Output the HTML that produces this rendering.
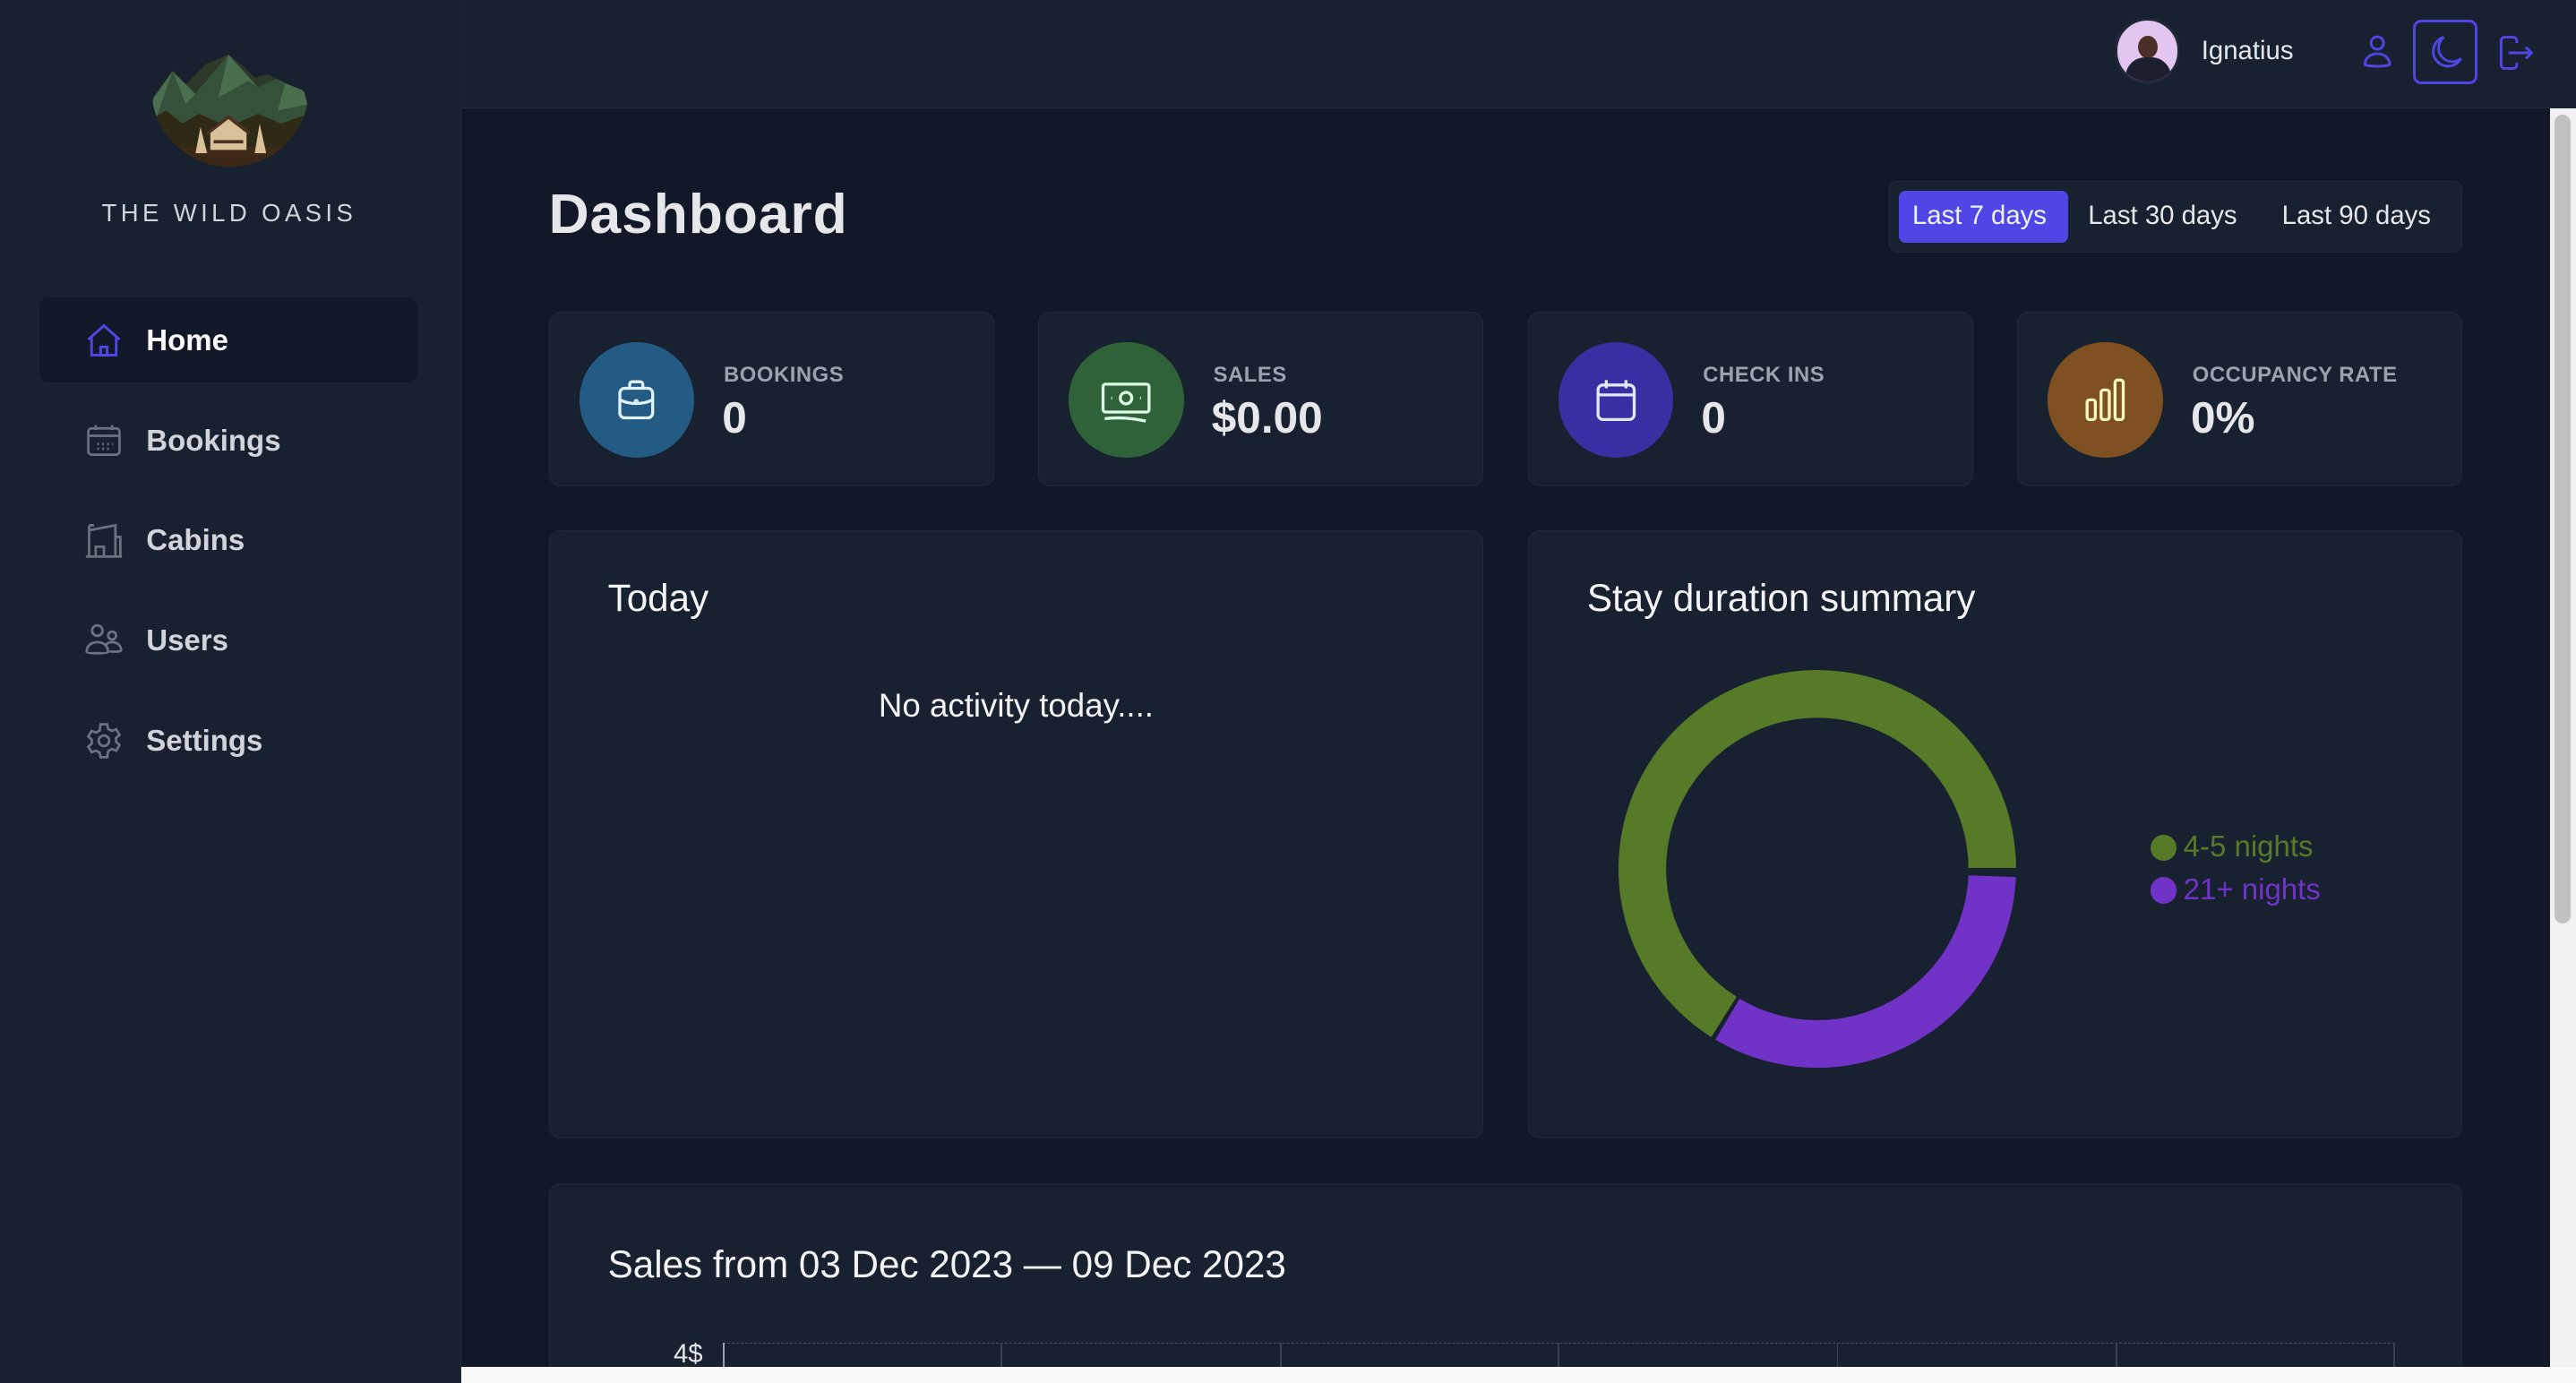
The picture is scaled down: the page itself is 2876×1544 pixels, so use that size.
<!DOCTYPE html>
<html><head><meta charset="utf-8">
<style>
html{zoom:1.83418;overflow:hidden;height:841.8px}
*{box-sizing:border-box;margin:0;padding:0}
body{width:1568px;height:841.8px;overflow:hidden;background:#111827;font-family:"Liberation Sans",sans-serif;color:#e5e7eb;position:relative}
.side{position:absolute;left:0;top:0;width:281px;height:842px;background:#18212f;border-right:1px solid #1f2937}
.logo{position:absolute;left:91px;top:33px}
.brand{position:absolute;left:0;width:279px;top:121px;text-align:center;font-size:15px;letter-spacing:2.4px;color:#d1d5db}
.nav{position:absolute;left:24px;width:230px;height:52px;border-radius:6px;display:flex;align-items:center}
.nav svg{position:absolute;left:27px}
.nav span{position:absolute;left:65px;font-size:18px;font-weight:bold;color:#d1d5db}
.nav.act{background:#111827}
.nav.act span{color:#f9fafb}
.hdr{position:absolute;left:281px;top:0;width:1287px;height:66px;background:#18212f;border-bottom:1px solid #1f2937}
.main{position:absolute;left:281px;top:66px;width:1271px;height:766px;background:#111827;overflow:hidden}
.bottom{position:absolute;left:281px;top:832px;width:1287px;height:10px;background:#f9f9f9}
.sb{position:absolute;left:1552px;top:66px;width:16px;height:766px;background:#f1f1f1}
.sb div{position:absolute;left:3px;top:4px;width:10px;height:492px;background:#c1c1c1;border-radius:5px}
.card{position:absolute;background:#18212f;border:1px solid #1f2937;border-radius:7px}
.stat{top:190px;width:271px;height:106px}
.circ{position:absolute;left:18px;top:18px;width:70px;height:70px;border-radius:50%;display:flex;align-items:center;justify-content:center}
.lab{position:absolute;left:106px;top:30px;font-size:13px;font-weight:bold;letter-spacing:.3px;color:#9ca3af}
.val{position:absolute;left:105px;top:48px;font-size:27px;font-weight:bold;color:#e5e7eb}
h2{position:absolute;font-size:23px;font-weight:normal;color:#f3f4f6}
</style></head><body>
<div class="side">
<svg class="logo" width="97" height="76" viewBox="0 0 97 76">
<defs><clipPath id="c"><path d="M2 26 L14 10 L22 18 L34 6 L48 0 L58 8 L64 14 L72 12 L84 18 L94 22 L96 30 A48 48 0 0 1 2 30 Z"/></clipPath></defs>
<g clip-path="url(#c)">
<rect width="97" height="76" fill="#2c3a2a"/>
<path d="M0 30 L14 10 L28 24 L48 0 L66 20 L84 12 L97 26 L97 50 L0 50Z" fill="#4b6e4e"/>
<path d="M14 10 L22 30 L30 22 L48 0 L42 26 L60 16 L66 20 L84 12 L78 34 L97 30 L97 50 L0 50Z" fill="#35513a"/>
<rect y="44" width="97" height="32" fill="#3c2a16"/>
<path d="M0 40 L10 34 L20 42 L30 36 L48 44 L66 36 L80 42 L97 36 L97 56 L0 56Z" fill="#2f2a15"/>
<path d="M37 58 L37 47 L48 39 L59 47 L59 58Z" fill="#d9c29a"/>
<path d="M35 48 L48 38 L61 48" stroke="#4a3220" stroke-width="2" fill="none"/>
<rect x="39" y="52" width="18" height="2" fill="#4a3220"/>
<path d="M28 60 L31 44 L35 60Z M64 60 L67 42 L71 60Z" fill="#d9c29a"/>
<rect y="62" width="97" height="14" fill="#3a2614"/>
</g>
</svg>
<div class="brand">THE WILD OASIS</div>
<div class="nav act" style="top:181px"><svg width="24" height="24" viewBox="0 0 24 24" fill="none" stroke="#4f46e5" stroke-width="1.6"><path d="M2.5 11.5 L12 3 L21.5 11.5 M4.5 9.8V21h15V9.8 M10 21v-5h4v5"/></svg><span>Home</span></div>
<div class="nav" style="top:242px"><svg width="24" height="24" viewBox="0 0 24 24" fill="none" stroke="#6b7280" stroke-width="1.5"><rect x="2.5" y="4.5" width="19" height="16" rx="2"/><path d="M7 2.5v3M17 2.5v3M2.5 9h19M8 14h1M11 14h1M14 14h1M17 14h0.5M8 17h1M11 17h1M14 17h1"/></svg><span>Bookings</span></div>
<div class="nav" style="top:303px"><svg width="24" height="24" viewBox="0 0 24 24" fill="none" stroke="#6b7280" stroke-width="1.5"><path d="M1 22h22M3 22V3M3 6l16-3v19M19 10h3v12M7 22v-6h5v6M3 3h3"/></svg><span>Cabins</span></div>
<div class="nav" style="top:364px"><svg width="24" height="24" viewBox="0 0 24 24" fill="none" stroke="#6b7280" stroke-width="1.5"><circle cx="8" cy="6" r="3.2"/><circle cx="17" cy="9" r="2.4"/><path d="M1.5 19c0-4 3-6 6.5-6s6.5 2 6.5 6c0 1-13 1-13 0z M13 15c1-1.5 2.5-2 4-2 3 0 5.5 2 5.5 5 0 1-6 1-7 .5"/></svg><span>Users</span></div>
<div class="nav" style="top:425px"><svg width="24" height="24" viewBox="0 0 24 24" fill="none" stroke="#6b7280" stroke-width="1.5"><circle cx="12" cy="12" r="3.2"/><path d="M10 2h4l.6 2.8 2.2 1.2 2.7-1 2 3.4-2.1 1.9v2.4l2.1 1.9-2 3.4-2.7-1-2.2 1.2L14 22h-4l-.6-2.8-2.2-1.2-2.7 1-2-3.4 2.1-1.9v-2.4L2.5 9.4l2-3.4 2.7 1 2.2-1.2z"/></svg><span>Settings</span></div>
</div>

<div class="hdr">
<div style="position:absolute;left:1006px;top:11px;width:40px;height:40px;border-radius:50%;background:#e2c6ef;border:2px solid #1f2937;overflow:hidden">
<div style="position:absolute;left:13px;top:9px;width:12px;height:14px;border-radius:50%;background:#4a3026"></div>
<div style="position:absolute;left:5px;top:22px;width:28px;height:20px;border-radius:12px 12px 0 0;background:#1c1f2e"></div>
</div>
<div style="position:absolute;left:1059px;top:22px;font-size:16px;color:#e5e7eb">Ignatius</div>
<svg style="position:absolute;left:1155px;top:20px" width="22" height="22" viewBox="0 0 22 22" fill="none" stroke="#4f46e5" stroke-width="1.6"><circle cx="11" cy="6" r="3.8"/><path d="M3.5 19c0-4 3.5-6.5 7.5-6.5s7.5 2.5 7.5 6.5c0 1.5-15 1.5-15 0z"/></svg>
<div style="position:absolute;left:1188px;top:12px;width:39px;height:39px;border:2px solid #4f46e5;border-radius:5px"></div>
<svg style="position:absolute;left:1196px;top:20px" width="24" height="24" viewBox="0 0 24 24" fill="none" stroke="#4f46e5" stroke-width="1.6"><path d="M10.5 2.5A9 9 0 1 0 21 15.5 8 8 0 0 1 10.5 2.5z"/></svg>
<svg style="position:absolute;left:1238px;top:20px" width="24" height="24" viewBox="0 0 24 24" fill="none" stroke="#4f46e5" stroke-width="1.6"><path d="M13 6V4.5A2 2 0 0 0 11 2.5H5.5a2 2 0 0 0-2 2v15a2 2 0 0 0 2 2H11a2 2 0 0 0 2-2V18M8 12h14M18.5 8.5 22 12l-3.5 3.5"/></svg>
</div>

<div class="main"></div>
<div style="position:absolute;left:334px;top:111px;font-size:34px;font-weight:bold;color:#e5e7eb;letter-spacing:.5px">Dashboard</div>
<div style="position:absolute;left:1150px;top:110px;width:349px;height:44px;background:#18212f;border:1px solid #1f2937;border-radius:5px"></div>
<div style="position:absolute;left:1156px;top:116px;width:103px;height:32px;background:#4f46e5;border-radius:4px"></div>
<div style="position:absolute;left:1164px;top:122px;font-size:16px;color:#eef2ff">Last 7 days</div>
<div style="position:absolute;left:1271px;top:122px;font-size:16px;color:#e5e7eb">Last 30 days</div>
<div style="position:absolute;left:1389px;top:122px;font-size:16px;color:#e5e7eb">Last 90 days</div>

<div class="card stat" style="left:334px"><div class="circ" style="background:#245b85"><svg width="32" height="32" viewBox="0 0 32 32" fill="none" stroke="#e0f2fe" stroke-width="1.8"><path d="M12 9V6.5a1.5 1.5 0 0 1 1.5-1.5h5A1.5 1.5 0 0 1 20 6.5V9"/><rect x="6" y="9" width="20" height="18" rx="3"/><path d="M6 16c6 3 14 3 20 0"/><circle cx="16" cy="17" r=".6"/></svg></div><div class="lab">BOOKINGS</div><div class="val">0</div></div>
<div class="card stat" style="left:632px"><div class="circ" style="background:#2f6238"><svg width="34" height="34" viewBox="0 0 34 34" fill="none" stroke="#dcfce7" stroke-width="1.8"><rect x="3" y="7" width="28" height="17" rx="1.5"/><circle cx="17" cy="15.5" r="3.5"/><path d="M8 15.5h.5M25.5 15.5h.5M4 28c9-1 18 0 25 1.5"/></svg></div><div class="lab">SALES</div><div class="val">$0.00</div></div>
<div class="card stat" style="left:930px"><div class="circ" style="background:#3730a3"><svg width="32" height="32" viewBox="0 0 32 32" fill="none" stroke="#e0e7ff" stroke-width="1.8"><rect x="5" y="7" width="22" height="21" rx="3"/><path d="M10 4v5M22 4v5M5 13h22"/></svg></div><div class="lab">CHECK INS</div><div class="val">0</div></div>
<div class="card stat" style="left:1228px"><div class="circ" style="background:#7f5021"><svg width="32" height="32" viewBox="0 0 32 32" fill="none" stroke="#fef9c3" stroke-width="1.8"><rect x="5" y="16" width="5" height="12" rx="1.5"/><rect x="13.5" y="10" width="5" height="18" rx="1.5"/><rect x="22" y="4" width="5" height="24" rx="1.5"/></svg></div><div class="lab">OCCUPANCY RATE</div><div class="val">0%</div></div>

<div class="card" style="left:334px;top:323px;width:569px;height:370px"></div>
<h2 style="left:370px;top:351px">Today</h2>
<div style="position:absolute;left:334px;width:569px;top:418px;text-align:center;font-size:20px;color:#f3f4f6">No activity today....</div>

<div class="card" style="left:930px;top:323px;width:569px;height:370px"></div>
<h2 style="left:966px;top:351px">Stay duration summary</h2>
<svg style="position:absolute;left:985px;top:408px" width="242" height="242" viewBox="-121 -121 242 242">
<path d="M121 -0.5 A121 121 0 1 0 -64.5 102.4 L-49.1 77.9 A92 92 0 1 1 92 -0.5Z" fill="#577a28"/>
<path d="M120.9 5 A121 121 0 0 1 -62 104 L-47.3 79 A92 92 0 0 0 92 4Z" fill="#7132c7"/>
</svg>
<div style="position:absolute;left:1309px;top:508px;width:16px;height:16px;border-radius:50%;background:#577a28"></div>
<div style="position:absolute;left:1329px;top:505px;font-size:18px;color:#577a28">4-5 nights</div>
<div style="position:absolute;left:1309px;top:534px;width:16px;height:16px;border-radius:50%;background:#7132c7"></div>
<div style="position:absolute;left:1329px;top:531px;font-size:18px;color:#7132c7">21+ nights</div>

<div class="card" style="left:334px;top:720px;width:1165px;height:112px;border-bottom:none;border-radius:7px 7px 0 0"></div>
<h2 style="left:370px;top:757px">Sales from 03 Dec 2023 — 09 Dec 2023</h2>
<div style="position:absolute;left:410px;top:815px;font-size:16px;color:#e5e7eb">4$</div>
<div style="position:absolute;left:440px;top:817px;width:1018px;border-top:1px dashed #4b5563"></div>
<div style="position:absolute;left:440px;top:817px;width:1px;height:15px;background:#9ca3af"></div>
<div style="position:absolute;left:609px;top:817px;width:1px;height:15px;background:#374151"></div>
<div style="position:absolute;left:779px;top:817px;width:1px;height:15px;background:#374151"></div>
<div style="position:absolute;left:948px;top:817px;width:1px;height:15px;background:#374151"></div>
<div style="position:absolute;left:1118px;top:817px;width:1px;height:15px;background:#374151"></div>
<div style="position:absolute;left:1288px;top:817px;width:1px;height:15px;background:#374151"></div>
<div style="position:absolute;left:1457px;top:817px;width:1px;height:15px;background:#374151"></div>

<div class="bottom"></div>
<div class="sb"><div></div></div>
</body></html>
